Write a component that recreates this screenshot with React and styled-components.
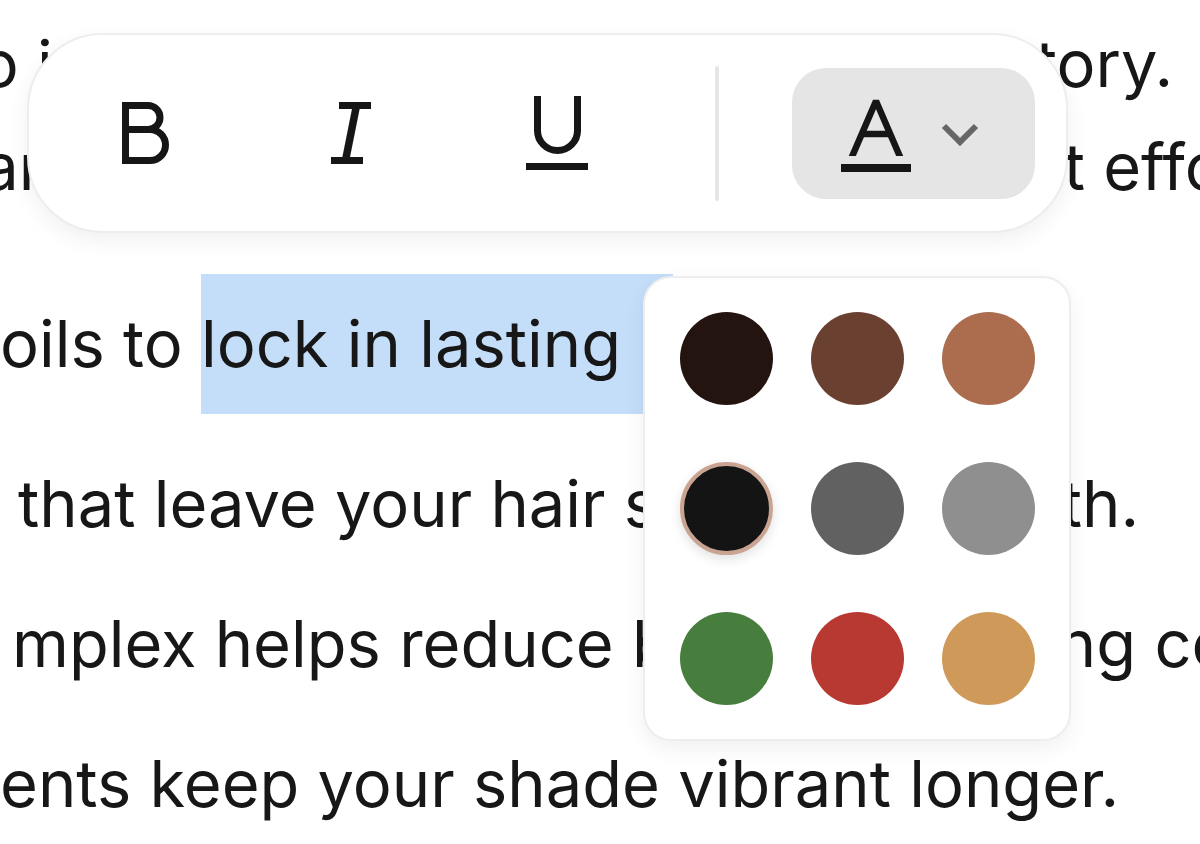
import styled, { createGlobalStyle } from 'styled-components';

const SWATCHES = [
  '#231410', '#6a4030', '#ac6c4e',
  '#141414', '#616161', '#8f8f8f',
  '#477e3d', '#b73932', '#cf9a59',
];

const SELECTED = 3;

const GlobalStyle = createGlobalStyle`
  html, body {
    margin: 0;
    padding: 0;
    background: #ffffff;
    overflow: hidden;
  }
  * {
    box-sizing: border-box;
  }
`;

const Page = styled.div`
  position: relative;
  width: 1200px;
  height: 844px;
  overflow: hidden;
  background: #ffffff;
`;

const Doc = styled.div`
  font-family: Inter, "Liberation Sans", sans-serif;
  font-size: 65px;
  color: #171717;
`;

const Paragraph = styled.p`
  margin: ${({ $mt }) => $mt}px 0 0;
  line-height: ${({ $lh }) => $lh}px;
`;

const Line = styled.span`
  display: block;
  white-space: nowrap;
  margin-left: ${({ $indent }) => $indent || 0}px;
`;

// selection box reaches a little past the word, under the popover
const Highlight = styled.span`
  display: inline-block;
  padding-right: 52px;
  background: #c4ddf8;
`;

const Toolbar = styled.div`
  position: absolute;
  left: 27px;
  top: 33px;
  width: 1041px;
  height: 200px;
  display: flex;
  align-items: center;
  padding-left: 51px;
  background: #ffffff;
  border: 2px solid #ededed;
  border-radius: 76px;
  box-shadow: 0 8px 22px rgba(0, 0, 0, 0.06);
`;

const ButtonGroup = styled.div`
  display: flex;
  align-items: center;
  gap: 76px;
`;

const ToolButton = styled.button`
  width: 130px;
  height: 130px;
  display: flex;
  align-items: center;
  justify-content: center;
  padding: 0;
  border: none;
  background: transparent;
  color: #161616;
  cursor: pointer;
`;

const Divider = styled.div`
  width: 4px;
  height: 135px;
  margin: 0 73px 0 93px;
  border-radius: 2px;
  background: #e6e6e6;
`;

const ColorButton = styled.button`
  width: 243px;
  height: 131px;
  display: flex;
  align-items: center;
  gap: 30px;
  padding: 2px 0 0 49px;
  border: none;
  border-radius: 34px;
  background: #e5e5e5;
  cursor: pointer;
`;

const Popover = styled.div`
  position: absolute;
  left: 643px;
  top: 276px;
  display: grid;
  grid-template-columns: repeat(3, 93px);
  column-gap: 38px;
  row-gap: 57px;
  padding: 34px 34px 34px 35px;
  background: #ffffff;
  border: 2px solid #ededed;
  border-radius: 28px;
  box-shadow: 0 8px 22px rgba(0, 0, 0, 0.06);
`;

const Swatch = styled.button`
  width: 93px;
  height: 93px;
  padding: 0;
  border-radius: 50%;
  border: ${({ $selected }) => ($selected ? '4.5px solid #c9a492' : 'none')};
  background: ${({ $color }) => $color};
  box-shadow: ${({ $selected }) => ($selected ? '0 4px 12px rgba(0, 0, 0, 0.12)' : 'none')};
  cursor: pointer;
`;

function BoldIcon() {
  return (
    <svg width="47" height="62" viewBox="0 0 47 62" fill="none" stroke="currentColor" strokeWidth="7">
      <path d="M3.5 0V62M0 3.5H26a12 12 0 0 1 0 24H3.5M3.5 27.5H28a15.5 15.5 0 0 1 0 31H0" />
    </svg>
  );
}

function ItalicIcon() {
  return (
    <svg width="40" height="62" viewBox="0 0 40 62" fill="none" stroke="currentColor" strokeWidth="7">
      <path d="M8 3.5H40M0 58.5H32" />
      <path d="M25.5 3.5L14.5 58.5" strokeWidth="7.5" />
    </svg>
  );
}

function UnderlineIcon() {
  return (
    <svg width="62" height="74" viewBox="0 0 62 74" fill="none" stroke="currentColor" strokeWidth="7">
      <path d="M11.5 0V34.5a20 20 0 0 0 40 0V0" />
      <path d="M0 70.5H62" />
    </svg>
  );
}

function TextColorIcon() {
  return (
    <svg width="70" height="75" viewBox="0 0 70 75" fill="none" stroke="#161616">
      <defs>
        <clipPath id="glyph-a">
          <rect x="0" y="0" width="70" height="59" />
        </clipPath>
      </defs>
      <g clipPath="url(#glyph-a)" strokeWidth="6.5" strokeLinejoin="bevel">
        <path d="M10 62L35 4L60 62" />
        <path d="M19 37H51" />
      </g>
      <path d="M0 71H70" strokeWidth="8" />
    </svg>
  );
}

function ChevronIcon() {
  return (
    <svg width="38" height="24" viewBox="0 0 38 24" fill="none" stroke="#666666" strokeWidth="6">
      <path d="M3 4L19 20L35 4" />
    </svg>
  );
}

export default function App() {
  return (
    <Page>
      <GlobalStyle />
      <Doc>
        <Paragraph $mt={12} $lh={103}>
          <Line $indent={-41}>to infuse brilliance into your color story.</Line>
          <Line $indent={-173}>regular care delivers finer results without effort.</Line>
        </Paragraph>
        <Paragraph $mt={56} $lh={140}>
          <Line>
            oils to <Highlight>lock in lasting</Highlight> color.
          </Line>
        </Paragraph>
        <Paragraph $mt={20} $lh={140}>
          <Line $indent={18}>that leave your hair soft and smooth.</Line>
          <Line $indent={12}>mplex helps reduce breakage during coloring.</Line>
          <Line>ents keep your shade vibrant longer.</Line>
        </Paragraph>
      </Doc>

      <Toolbar>
        <ButtonGroup>
          <ToolButton aria-label="Bold">
            <BoldIcon />
          </ToolButton>
          <ToolButton aria-label="Italic">
            <ItalicIcon />
          </ToolButton>
          <ToolButton aria-label="Underline">
            <UnderlineIcon />
          </ToolButton>
        </ButtonGroup>
        <Divider />
        <ColorButton aria-label="Text color">
          <TextColorIcon />
          <ChevronIcon />
        </ColorButton>
      </Toolbar>

      <Popover>
        {SWATCHES.map((color, i) => (
          <Swatch key={color} $color={color} $selected={i === SELECTED} />
        ))}
      </Popover>
    </Page>
  );
}
